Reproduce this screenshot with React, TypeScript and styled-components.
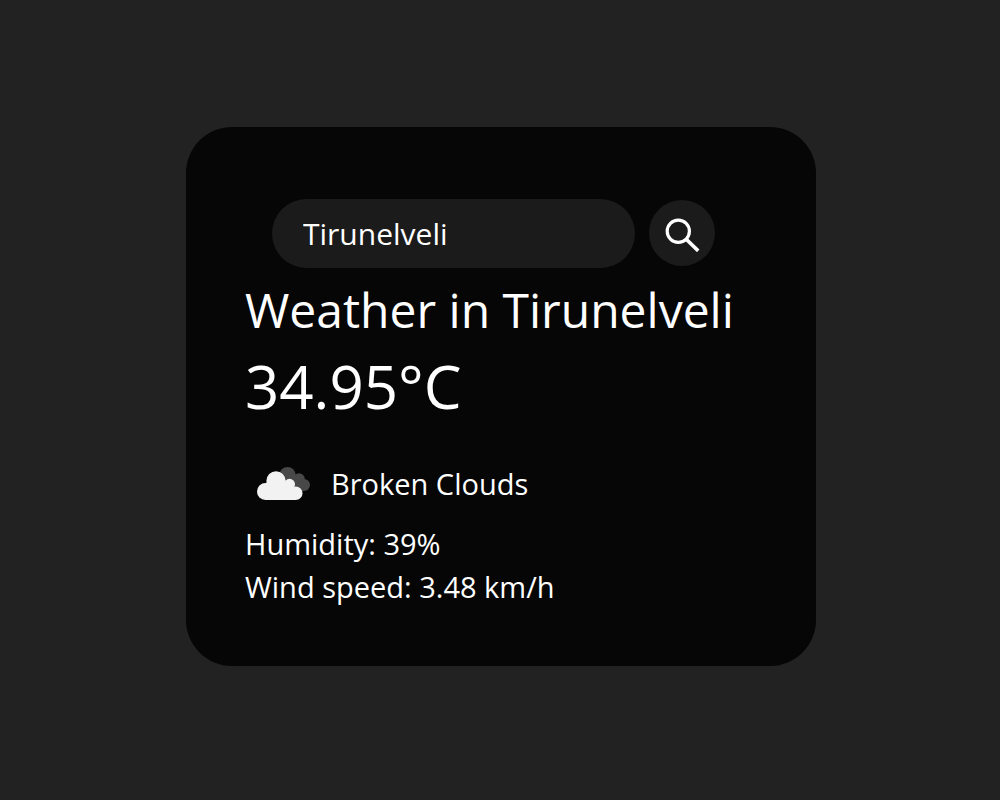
import React, { useState } from "react";
import styled, { createGlobalStyle } from "styled-components";

const GlobalStyle = createGlobalStyle`
  * { box-sizing: border-box; }
  body {
    margin: 0;
    background: #222222;
    color: #ffffff;
    font-family: "Open Sans", sans-serif;
  }
`;

const Page = styled.main`
  display: flex;
  justify-content: center;
  align-items: center;
  min-height: 100vh;
  padding: 0 0 8px 2px;
`;

const Card = styled.section`
  width: 100%;
  max-width: 630px;
  padding: 72px 59px 58px;
  border-radius: 46px;
  background: #060606;
  font-size: 29px;
  line-height: 43px;
`;

const SearchForm = styled.form`
  display: flex;
  align-items: center;
  gap: 14px;
  margin: 0 42px 8px 27px;
`;

const SearchInput = styled.input`
  flex: 1;
  min-width: 0;
  height: 69px;
  padding: 0 31px;
  border: none;
  border-radius: 35px;
  outline: none;
  background: #1b1b1b;
  color: inherit;
  font-family: inherit;
  font-size: 30px;
`;

const SearchButton = styled.button`
  display: flex;
  align-items: center;
  justify-content: center;
  flex: none;
  width: 66px;
  height: 66px;
  padding: 0;
  border: none;
  border-radius: 50%;
  background: #1b1b1b;
  color: inherit;
  cursor: pointer;
`;

const City = styled.h1`
  margin: 0;
  font-size: 48px;
  font-weight: 400;
  line-height: 68px;
`;

const Temperature = styled.p`
  margin: 0 0 18px;
  font-size: 60px;
  line-height: 84px;
`;

const Conditions = styled.div`
  display: flex;
  align-items: center;
  gap: 10px;
`;

const Reading = styled.p`
  margin: 0;
`;

const SearchIcon = () => (
  <svg width="38" height="38" viewBox="0 0 38 38" fill="none" stroke="currentColor" aria-hidden="true">
    <circle cx="15.3" cy="17.3" r="11.1" strokeWidth="3.2" />
    <path d="M23 25 35.2 36.9" strokeWidth="3.6" />
  </svg>
);

const CloudsIcon = () => (
  <svg width="76" height="76" viewBox="0 0 76 76" aria-hidden="true">
    <g fill="#484848">
      <circle cx="42.5" cy="29" r="8" />
      <circle cx="54" cy="33" r="5.8" />
      <circle cx="59" cy="39" r="6" />
      <path d="M39 30 49 27 59 36 58 44.9H49z" />
    </g>
    <g fill="#f2f2f2">
      <circle cx="31" cy="34.8" r="9.6" />
      <circle cx="20.5" cy="45.5" r="8.5" />
      <circle cx="44.5" cy="38.3" r="5.5" />
      <circle cx="50.7" cy="47.2" r="6.8" />
      <path d="M21.500 36 45 38 51 42V54H20.500z" />
    </g>
  </svg>
);

export default function App() {
  const [query, setQuery] = useState("Tirunelveli");
  return (
    <>
      <GlobalStyle />
      <Page>
        <Card>
          <SearchForm role="search" onSubmit={(event) => event.preventDefault()}>
            <SearchInput
              type="text"
              aria-label="City"
              value={query}
              onChange={(event) => setQuery(event.target.value)}
            />
            <SearchButton type="submit" aria-label="Search">
              <SearchIcon />
            </SearchButton>
          </SearchForm>
          <City>Weather in Tirunelveli</City>
          <Temperature>34.95°C</Temperature>
          <Conditions>
            <CloudsIcon />
            <Reading>Broken Clouds</Reading>
          </Conditions>
          <Reading>Humidity: 39%</Reading>
          <Reading>Wind speed: 3.48 km/h</Reading>
        </Card>
      </Page>
    </>
  );
}
